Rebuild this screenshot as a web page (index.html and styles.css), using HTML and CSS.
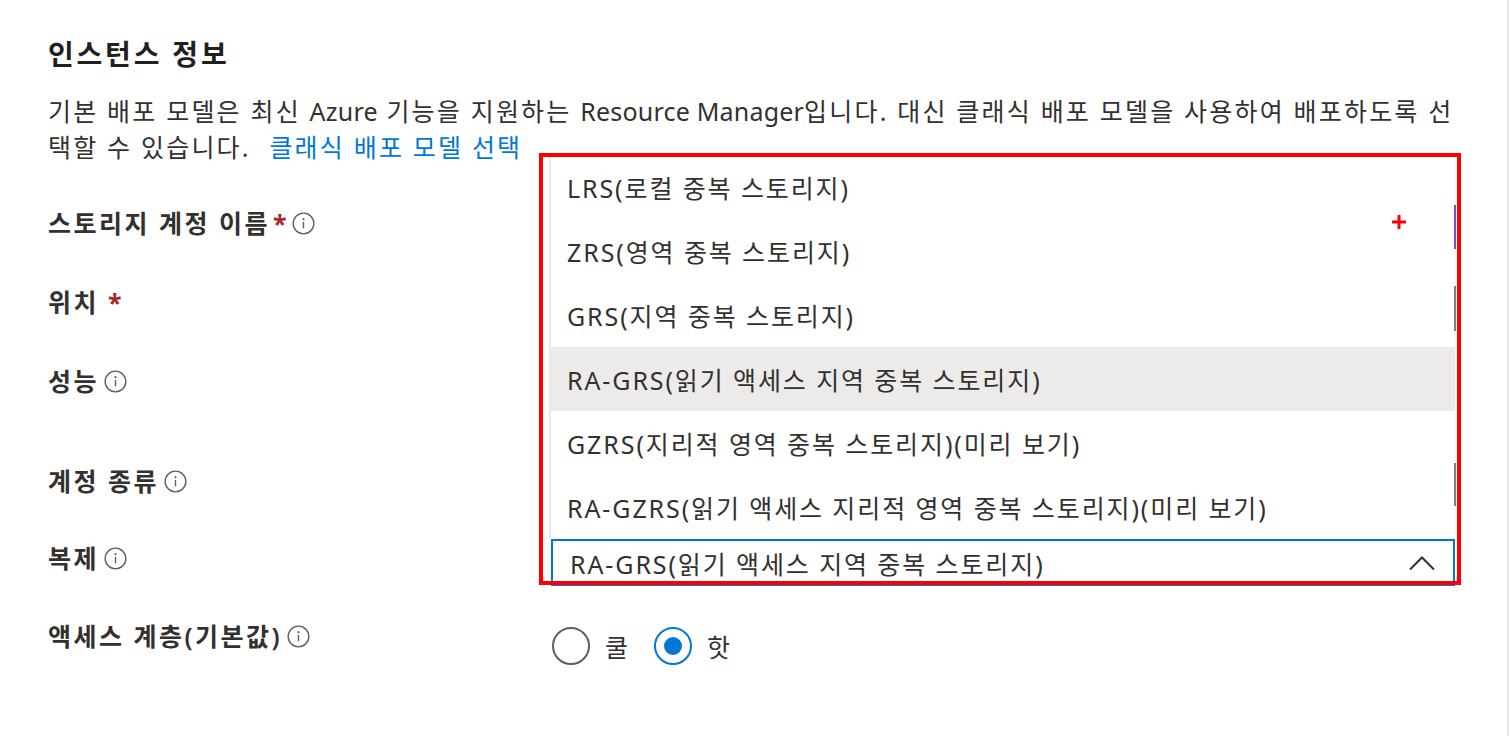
FILE: index.html
```html
<!DOCTYPE html>
<html lang="ko">
<head>
	<meta charset="UTF-8">
	<title>스토리지 계정 만들기</title>
	<link rel="stylesheet" href="styles.css">
</head>
<body>
<div class="page">
	<h2 class="section-title">인스턴스 정보</h2>
	<p class="section-desc">기본 배포 모델은 최신 <span class="latin">Azure</span> 기능을 지원하는 <span class="latin">Resource Manager</span>입니다. 대신 클래식 배포 모델을 사용하여 배포하도록 선<br>택할 수 있습니다. <a class="link" href="#">클래식 배포 모델 선택</a></p>

	<div class="form">
		<div class="form-row row-name">
			<div class="label">스토리지 계정 이름<span class="required">*</span><svg class="info" viewBox="0 0 20 20"><circle cx="10" cy="10" r="9"/><path d="M10 8.6v5.6"/><circle class="dot" cx="10" cy="6.2" r=".9"/></svg></div>
			<div class="control"></div>
		</div>
		<div class="form-row row-location">
			<div class="label">위치<span class="required spaced">*</span></div>
			<div class="control"></div>
		</div>
		<div class="form-row row-performance">
			<div class="label">성능<svg class="info" viewBox="0 0 20 20"><circle cx="10" cy="10" r="9"/><path d="M10 8.6v5.6"/><circle class="dot" cx="10" cy="6.2" r=".9"/></svg></div>
			<div class="control"></div>
		</div>
		<div class="form-row row-kind">
			<div class="label">계정 종류<svg class="info" viewBox="0 0 20 20"><circle cx="10" cy="10" r="9"/><path d="M10 8.6v5.6"/><circle class="dot" cx="10" cy="6.2" r=".9"/></svg></div>
			<div class="control"></div>
		</div>
		<div class="form-row row-replication">
			<div class="label">복제<svg class="info" viewBox="0 0 20 20"><circle cx="10" cy="10" r="9"/><path d="M10 8.6v5.6"/><circle class="dot" cx="10" cy="6.2" r=".9"/></svg></div>
			<div class="control">
				<div class="dropdown">
					<ul class="dropdown-list">
						<li class="option">LRS(로컬 중복 스토리지)</li>
						<li class="option">ZRS(영역 중복 스토리지)</li>
						<li class="option">GRS(지역 중복 스토리지)</li>
						<li class="option selected">RA-GRS(읽기 액세스 지역 중복 스토리지)</li>
						<li class="option">GZRS(지리적 영역 중복 스토리지)(미리 보기)</li>
						<li class="option">RA-GZRS(읽기 액세스 지리적 영역 중복 스토리지)(미리 보기)</li>
						<span class="scroll-mark mark-1"></span>
						<span class="scroll-mark mark-2"></span>
						<span class="scroll-mark mark-3"></span>
					</ul>
					<div class="dropdown-field">
						<span>RA-GRS(읽기 액세스 지역 중복 스토리지)</span>
						<svg class="chevron" viewBox="0 0 28 16"><path d="M2 14.5L14 2.5l12 12"/></svg>
					</div>
					<!-- red highlight drawn over the screenshot -->
					<div class="annotation">
						<svg class="annotation-cross" viewBox="0 0 14 14"><path d="M7 0v14M0 7h14"/></svg>
					</div>
				</div>
			</div>
		</div>
		<div class="form-row row-tier">
			<div class="label">액세스 계층(기본값)<svg class="info" viewBox="0 0 20 20"><circle cx="10" cy="10" r="9"/><path d="M10 8.6v5.6"/><circle class="dot" cx="10" cy="6.2" r=".9"/></svg></div>
			<div class="control">
				<div class="radio-group">
					<label class="radio"><span class="radio-circle"></span>쿨</label>
					<label class="radio checked"><span class="radio-circle"></span>핫</label>
				</div>
			</div>
		</div>
	</div>
</div>
</body>
</html>
```

FILE: styles.css
```css
:root {
	--color-text: #323130;
	--color-heading: #201f1e;
	--color-muted: #605e5c;
	--color-link: #0078d4;
	--color-required: #a4262c;
	--color-hover: #edebe9;
	--color-annotation: #ff0000;

	/* hangul in the original font runs wider than Noto CJK */
	--hangul-spacing: 2.2px;
	--option-spacing: 1.9px;
}

html {
	font-family: "Noto Sans", "Noto Sans CJK KR", sans-serif;
	color: var(--color-text);
	background: #fff;
}

body {
	margin: 0;
}

.page {
	box-sizing: border-box;
	width: 1509px;
	min-height: 736px;
	padding: 36px 0 0 48px;
	border-right: 2px solid #e6e6e6;
}

.section-title {
	margin: 0;
	font-size: 28px;
	line-height: 36px;
	font-weight: 700;
	letter-spacing: 2.8px;
	color: var(--color-heading);
}

.section-desc {
	margin: 21px 0 0;
	font-size: 25px;
	line-height: 36px;
	letter-spacing: var(--hangul-spacing);
	white-space: nowrap;
}

.section-desc .latin {
	letter-spacing: .2px;
}

.link {
	margin-left: 10px;
	color: var(--color-link);
	text-decoration: none;
}

/* form rows */

.form {
	margin-top: 40px;
}

.form-row {
	display: grid;
	grid-template-columns: 503px 904px;
	align-items: start;
}

.row-name,
.row-location { height: 79px; }
.row-performance { height: 100px; }
.row-kind { height: 77px; }
.row-replication { height: 78px; }

.label {
	display: flex;
	align-items: center;
	font-size: 25px;
	font-weight: 600;
	line-height: 36px;
	letter-spacing: 2.5px;
}

.required {
	margin-left: 3px;
	color: var(--color-required);
	font-weight: 700;
	letter-spacing: 0;
}

.required.spaced {
	margin-left: 9px;
}

.info {
	width: 23px;
	height: 23px;
	margin-left: 5px;
	fill: none;
	stroke: var(--color-muted);
	stroke-width: 1.2;
}

.info .dot {
	fill: var(--color-muted);
	stroke: none;
}

/* dropdown */

.dropdown {
	position: relative;
	margin-top: -1px;
	width: 904px;
}

.dropdown-field {
	box-sizing: border-box;
	display: flex;
	align-items: center;
	justify-content: space-between;
	height: 47px;
	padding: 0 17px 0 17px;
	border: 2px solid var(--color-link);
	font-size: 25px;
	letter-spacing: var(--option-spacing);
	box-shadow: inset 0 3px 3px -2px rgba(0, 0, 0, .08);
}

.chevron {
	width: 28px;
	height: 16px;
	fill: none;
	stroke: var(--color-text);
	stroke-width: 2;
}

.dropdown-list {
	position: absolute;
	left: 0;
	bottom: 100%;
	width: 904px;
	margin: 0;
	padding: 0;
	list-style: none;
	background: #fff;
	box-shadow: -2px 0 2px rgba(0, 0, 0, .1);
}

.option {
	display: flex;
	align-items: center;
	height: 64px;
	padding-left: 16px;
	font-size: 25px;
	letter-spacing: var(--option-spacing);
}

.option.selected {
	background: var(--color-hover);
}

.scroll-mark {
	position: absolute;
	right: -1px;
	width: 2px;
	background: #7f7f7f;
}

.mark-1 { top: 50px; height: 44px; background: #7b4fc1; }
.mark-2 { top: 131px; height: 45px; }
.mark-3 { top: 308px; height: 43px; }

.annotation {
	position: absolute;
	left: -12px;
	top: -386px;
	box-sizing: border-box;
	width: 922px;
	height: 432px;
	border: 4px solid var(--color-annotation);
	pointer-events: none;
}

.annotation-cross {
	position: absolute;
	left: 849px;
	top: 58px;
	width: 14px;
	height: 14px;
	stroke: var(--color-annotation);
	stroke-width: 3;
}

/* radios */

.radio-group {
	display: flex;
	align-items: center;
	margin-top: 9px;
}

.radio {
	display: flex;
	align-items: center;
	margin-right: 25px;
	font-size: 25px;
}

.radio-circle {
	box-sizing: border-box;
	width: 38px;
	height: 38px;
	margin-left: 1px;
	margin-right: 15px;
	border: 2px solid var(--color-muted);
	border-radius: 50%;
}

.radio.checked .radio-circle {
	display: flex;
	align-items: center;
	justify-content: center;
	border-color: var(--color-link);
}

.radio.checked .radio-circle::after {
	content: '';
	width: 18px;
	height: 18px;
	border-radius: 50%;
	background: var(--color-link);
}
```
